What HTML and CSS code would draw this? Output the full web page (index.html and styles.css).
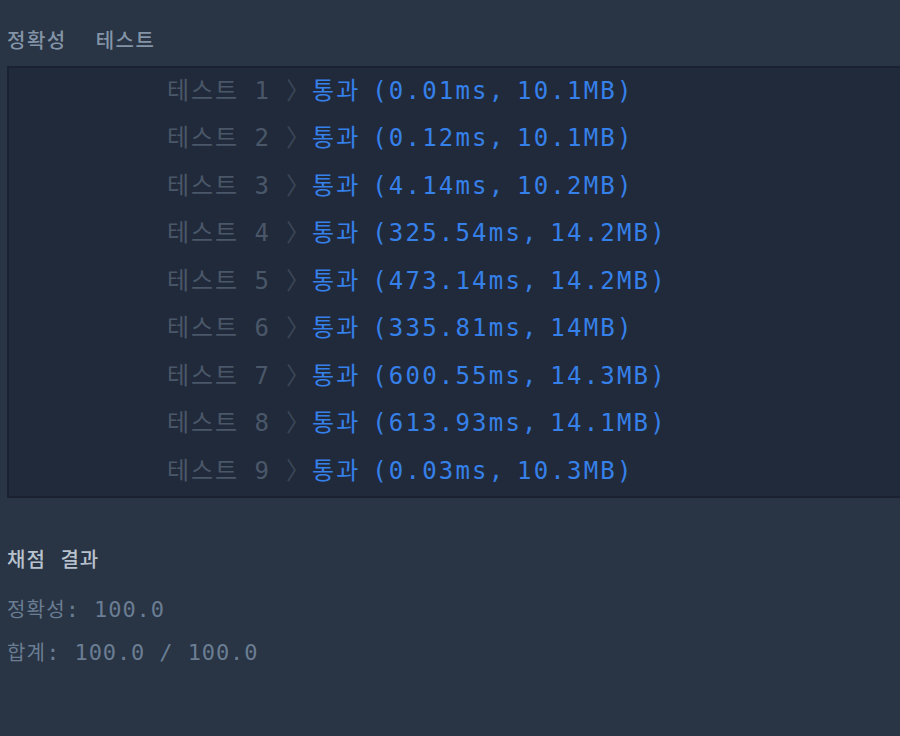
FILE: index.html
```html
<!DOCTYPE html>
<html lang="ko">
<head>
<meta charset="utf-8">
<link rel="stylesheet" href="styles.css">
</head>
<body>
<div class="page">
  <h2 class="section-title"><span>정확성</span><span>테스트</span></h2>
  <table class="results">
    <tbody>
      <tr><td class="label">테스트 1 <span class="chev">〉</span></td><td class="passed">통과 (0.01ms, 10.1MB)</td></tr>
      <tr><td class="label">테스트 2 <span class="chev">〉</span></td><td class="passed">통과 (0.12ms, 10.1MB)</td></tr>
      <tr><td class="label">테스트 3 <span class="chev">〉</span></td><td class="passed">통과 (4.14ms, 10.2MB)</td></tr>
      <tr><td class="label">테스트 4 <span class="chev">〉</span></td><td class="passed">통과 (325.54ms, 14.2MB)</td></tr>
      <tr><td class="label">테스트 5 <span class="chev">〉</span></td><td class="passed">통과 (473.14ms, 14.2MB)</td></tr>
      <tr><td class="label">테스트 6 <span class="chev">〉</span></td><td class="passed">통과 (335.81ms, 14MB)</td></tr>
      <tr><td class="label">테스트 7 <span class="chev">〉</span></td><td class="passed">통과 (600.55ms, 14.3MB)</td></tr>
      <tr><td class="label">테스트 8 <span class="chev">〉</span></td><td class="passed">통과 (613.93ms, 14.1MB)</td></tr>
      <tr><td class="label">테스트 9 <span class="chev">〉</span></td><td class="passed">통과 (0.03ms, 10.3MB)</td></tr>
    </tbody>
  </table>
  <h2 class="summary-title">채점 결과</h2>
  <p class="summary-line first"><span class="ko">정확성</span>: 100.0</p>
  <p class="summary-line"><span class="ko">합계</span>: 100.0 / 100.0</p>
</div>
</body>
</html>
```
FILE: styles.css
```css
html, body {
  margin: 0;
  padding: 0;
  background: #293445;
  overflow: hidden;
}
.page {
  padding-left: 7px;
  font-family: "DejaVu Sans Mono", "Noto Sans CJK KR", monospace;
}
.section-title {
  display: flex;
  gap: 29px;
  margin: 26px 0 0 0;
  font-family: "Noto Sans CJK KR", sans-serif;
  font-size: 20px;
  font-weight: 500;
  line-height: 28px;
  color: #8494a7;
  letter-spacing: 1.5px;
}
.results {
  margin-top: 12px;
  width: 1000px;
  border-collapse: collapse;
  background: #212a3a;
  border: 2px solid #1a2130;
  font-size: 24px;
  letter-spacing: 1.9px;
}
.results td {
  height: 45px;
  padding: 0 0 2.5px 0;
  line-height: 30px;
  white-space: nowrap;
}
.results .label {
  width: 303px;
  text-align: right;
  color: #4a5769;
  word-spacing: -1px;
}
.results .chev {
  color: #3a4658;
}
.results .passed {
  text-align: left;
  color: #3680ea;
  letter-spacing: 2.2px;
  word-spacing: -5px;
}
.summary-title {
  margin: 47px 0 0 0;
  font-family: "Noto Sans CJK KR", sans-serif;
  font-size: 20px;
  font-weight: 500;
  line-height: 28px;
  color: #b8c2ce;
  letter-spacing: 1px;
  word-spacing: 8px;
}
.summary-line {
  margin: 15px 0 0 0;
  font-size: 22px;
  line-height: 28px;
  color: #6a7d92;
  letter-spacing: 0.9px;
}
.summary-line .ko {
  font-size: 20px;
  letter-spacing: 1.2px;
}
.summary-line.first {
  margin-top: 23px;
}
```
